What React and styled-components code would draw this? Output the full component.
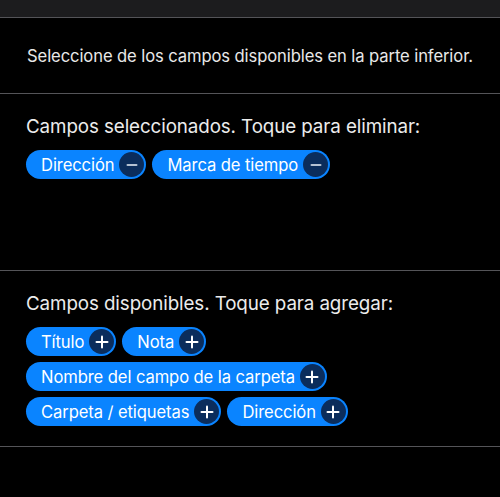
import styled, { createGlobalStyle } from 'styled-components';

const GlobalStyle = createGlobalStyle`
  html, body {
    margin: 0;
    padding: 0;
    background: #000;
  }
  body {
    font-family: Inter, "Liberation Sans", sans-serif;
    -webkit-font-smoothing: antialiased;
  }
`;

const selected = ['Dirección', 'Marca de tiempo'];
const available = [
  'Título',
  'Nota',
  'Nombre del campo de la carpeta',
  'Carpeta / etiquetas',
  'Dirección',
];

const Page = styled.div`
  width: 500px;
  height: 497px;
  background: #000;
  overflow: hidden;
`;

const TopBar = styled.div`
  height: 17px;
  background: #1c1c1e;
  border-bottom: 1px solid #545458;
`;

const Hint = styled.div`
  height: 75px;
  display: flex;
  align-items: center;
  justify-content: center;
  color: #e8e8e8;
  font-size: 16.6px;
  letter-spacing: -0.1px;
  border-bottom: 1px solid #545458;
`;

const Section = styled.section`
  height: ${(props) => props.$height}px;
  padding: 21px 26px 0;
  box-sizing: border-box;
  border-bottom: 1px solid #545458;
`;

const Heading = styled.h3`
  margin: 0 0 11px;
  color: #ececec;
  font-size: 18.8px;
  font-weight: 400;
  letter-spacing: -0.1px;
  line-height: 24px;
`;

const Chips = styled.div`
  display: flex;
  flex-wrap: wrap;
  gap: 6px 6px;
`;

const Chip = styled.button`
  display: inline-flex;
  align-items: center;
  gap: 5px;
  height: 29px;
  padding: 0 2px 0 15px;
  border: none;
  border-radius: 15px;
  background: #0a84ff;
  color: #fff;
  font-family: inherit;
  font-size: 16.6px;
  letter-spacing: -0.1px;
  cursor: pointer;
`;

const Badge = styled.span`
  width: 25px;
  height: 25px;
  border-radius: 50%;
  background: #0b2d5c;
  display: flex;
  align-items: center;
  justify-content: center;
  flex-shrink: 0;
`;

const Icon = ({ plus }) => (
  <svg width="14" height="14" viewBox="0 0 14 14">
    <line
      x1={plus ? 1.5 : 2.5}
      y1="7"
      x2={plus ? 12.5 : 11.5}
      y2="7"
      stroke={plus ? '#fff' : '#b5c2d3'}
      strokeWidth="2"
      strokeLinecap="round"
    />
    {plus && (
      <line x1="7" y1="1.5" x2="7" y2="12.5" stroke="#fff" strokeWidth="2" strokeLinecap="round" />
    )}
  </svg>
);

const App = () => (
  <>
    <GlobalStyle />
    <Page>
      <TopBar />
      <Hint>Seleccione de los campos disponibles en la parte inferior.</Hint>

      <Section $height={177}>
        <Heading>Campos seleccionados. Toque para eliminar:</Heading>
        <Chips>
          {selected.map((name) => (
            <Chip key={name}>
              {name}
              <Badge>
                <Icon />
              </Badge>
            </Chip>
          ))}
        </Chips>
      </Section>

      <Section $height={176}>
        <Heading>Campos disponibles. Toque para agregar:</Heading>
        <Chips>
          {available.map((name) => (
            <Chip key={name}>
              {name}
              <Badge>
                <Icon plus />
              </Badge>
            </Chip>
          ))}
        </Chips>
      </Section>
    </Page>
  </>
);

export default App;
